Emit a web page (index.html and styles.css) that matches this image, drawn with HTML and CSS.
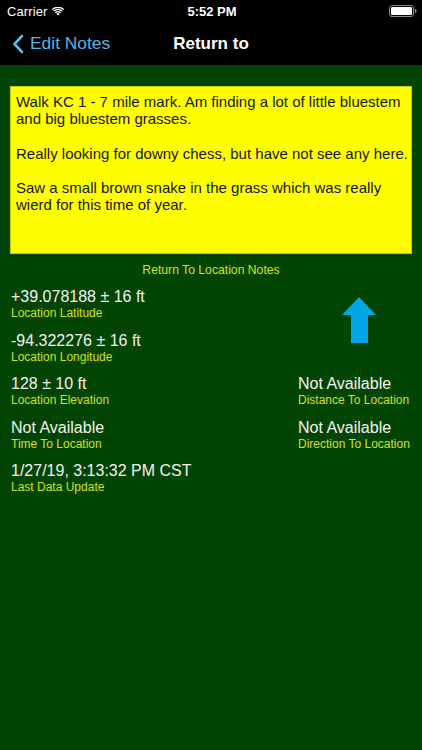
FILE: index.html
```html
<!DOCTYPE html>
<html>
<head>
<meta charset="utf-8">
<link rel="stylesheet" href="styles.css">
</head>
<body>
<div class="screen">
  <div class="topbar">
    <div class="status">
      <div class="status-left">
        <span class="carrier">Carrier</span>
        <svg class="wifi" width="12" height="9" viewBox="0 0 12 9">
          <path d="M6 8.6 L4.3 6.8 A2.5 2.5 0 0 1 7.7 6.8 Z" fill="#fff"/>
          <path d="M2.9 5.4 A4.4 4.4 0 0 1 9.1 5.4 L8.2 6.3 A3.1 3.1 0 0 0 3.8 6.3 Z" fill="#fff"/>
          <path d="M1.3 3.8 A6.6 6.6 0 0 1 10.7 3.8 L9.8 4.7 A5.3 5.3 0 0 0 2.2 4.7 Z" fill="#fff"/>
          <path d="M-0.2 2.2 A8.8 8.8 0 0 1 12.2 2.2 L11.3 3.1 A7.5 7.5 0 0 0 0.7 3.1 Z" fill="#fff"/>
        </svg>
      </div>
      <div class="time">5:52 PM</div>
      <div class="status-right">
        <svg class="battery" width="28" height="12" viewBox="0 0 28 12">
          <rect x="0.5" y="0.5" width="24" height="11" rx="2.5" fill="none" stroke="#8a8a8a" stroke-width="1"/>
          <rect x="2" y="2" width="21" height="8" rx="1.2" fill="#fff"/>
          <rect x="25.8" y="4" width="1.6" height="4" rx="0.7" fill="#8a8a8a"/>
        </svg>
      </div>
    </div>
    <div class="nav">
      <div class="back">
        <svg class="chev" width="12" height="20" viewBox="0 0 12 20">
          <path d="M10 2 L2.5 10 L10 18" fill="none" stroke="#5db3e6" stroke-width="2.6" stroke-linecap="round" stroke-linejoin="round"/>
        </svg>
        <span>Edit Notes</span>
      </div>
      <div class="title">Return to</div>
      <div class="nav-spacer"></div>
    </div>
  </div>

  <main class="content">
    <div class="notes">
      <p>Walk KC 1 - 7 mile mark. Am finding a lot of little bluestem and big bluestem grasses.</p>
      <p>Really looking for downy chess, but have not see any here.</p>
      <p>Saw a small brown snake in the grass which was really wierd for this time of year.</p>
    </div>
    <div class="notes-caption">Return To Location Notes</div>

    <div class="data">
      <div class="item c1 r1">
        <div class="value">+39.078188 ± 16 ft</div>
        <div class="label">Location Latitude</div>
      </div>
      <div class="arrow-cell">
        <svg class="arrow" width="34" height="46" viewBox="0 0 34 46">
          <path d="M17 0 L34 18 L26 18 L26 46 L9 46 L9 18 L0 18 Z" fill="#00a6e6"/>
        </svg>
      </div>
      <div class="item c1 r2">
        <div class="value">-94.322276 ± 16 ft</div>
        <div class="label">Location Longitude</div>
      </div>
      <div class="item c1 r3">
        <div class="value">128 ± 10 ft</div>
        <div class="label">Location Elevation</div>
      </div>
      <div class="item c2 r3">
        <div class="value">Not Available</div>
        <div class="label">Distance To Location</div>
      </div>
      <div class="item c1 r4">
        <div class="value">Not Available</div>
        <div class="label">Time To Location</div>
      </div>
      <div class="item c2 r4">
        <div class="value">Not Available</div>
        <div class="label">Direction To Location</div>
      </div>
      <div class="item c1 r5">
        <div class="value">1/27/19, 3:13:32 PM CST</div>
        <div class="label">Last Data Update</div>
      </div>
    </div>
  </main>
</div>
</body>
</html>
```

FILE: styles.css
```css
html, body {
  margin: 0;
  padding: 0;
}
body {
  font-family: "Liberation Sans", Arial, sans-serif;
  background: #024402;
  width: 422px;
  height: 750px;
  overflow: hidden;
}
.screen {
  width: 422px;
  height: 750px;
  display: flex;
  flex-direction: column;
  background: #024402;
}
.topbar {
  background: #000;
  height: 65px;
  color: #fff;
}
.status {
  height: 22px;
  display: grid;
  grid-template-columns: 1fr auto 1fr;
  align-items: center;
  padding: 0 5px 0 7px;
}
.status-left {
  display: flex;
  align-items: center;
  gap: 5px;
  font-size: 13px;
}
.carrier {
  letter-spacing: 0.1px;
}
.wifi {
  display: block;
}
.time {
  font-size: 13px;
  font-weight: bold;
  text-align: center;
}
.status-right {
  display: flex;
  justify-content: flex-end;
}
.battery {
  display: block;
}
.nav {
  height: 43px;
  display: grid;
  grid-template-columns: 1fr auto 1fr;
  align-items: center;
  padding: 0 8px 0 12px;
}
.back {
  display: flex;
  align-items: center;
  gap: 6px;
  color: #5db3e6;
  font-size: 17.4px;
}
.chev {
  display: block;
}
.title {
  font-size: 17px;
  font-weight: bold;
  text-align: center;
  margin-left: -4px;
}
.content {
  flex: 1;
  padding: 21px 10px 0 10px;
}
.notes {
  background: #ffff00;
  border: 1px solid #c9c90c;
  height: 168px;
  box-sizing: border-box;
  padding: 5px 0 0 5px;
  color: #151515;
  font-size: 15px;
  line-height: 17px;
}
.notes p {
  margin: 0 0 17.5px 0;
}
.notes p:first-child {
  margin-top: 1px;
}
.notes-caption {
  margin-top: 9px;
  text-align: center;
  color: #d2e21c;
  font-size: 12.2px;
  line-height: 14px;
}
.data {
  margin-top: 10px;
  padding-left: 1px;
  display: grid;
  grid-template-columns: 287px 1fr;
  row-gap: 9.5px;
}
.item .value {
  color: #f2f2f2;
  font-size: 16px;
  line-height: 19px;
}
.item .label {
  color: #d2e21c;
  font-size: 12px;
  line-height: 15px;
}
.c1 { grid-column: 1; }
.c2 { grid-column: 2; }
.r1 { grid-row: 1; }
.r2 { grid-row: 2; }
.r3 { grid-row: 3; }
.r4 { grid-row: 4; }
.r5 { grid-row: 5; }
.arrow-cell {
  grid-column: 2;
  grid-row: 1 / span 2;
  padding: 10px 0 0 44px;
}
.arrow {
  display: block;
}
```
